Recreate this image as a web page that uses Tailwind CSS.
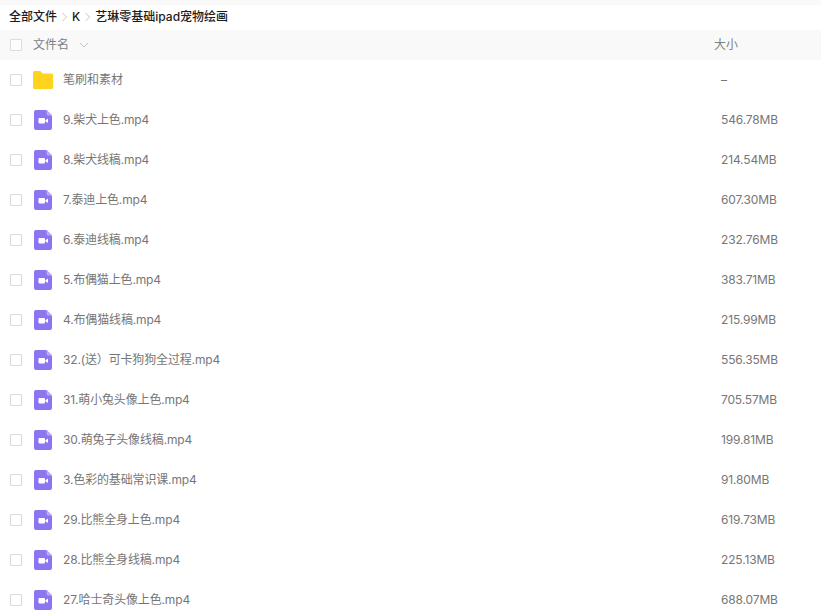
<!DOCTYPE html>
<html><head><meta charset="utf-8"><script src="https://cdn.jsdelivr.net/npm/@tailwindcss/browser@4"></script></head>
<body class="bg-white">
<svg width="0" height="0" class="absolute"><defs>
<symbol id="v" viewBox="0 0 18 20"><path d="M2 0H12.500L18 5.500V18a2 2 0 0 1-2 2H2a2 2 0 0 1-2-2V2a2 2 0 0 1 2-2Z" fill="#8d74f0"/><path d="M12.500 0L18 5.500H14a1.500 1.500 0 0 1-1.500-1.500Z" fill="#b9a8f7"/><rect x="4.500" y="8" width="6.500" height="5.500" rx="1" fill="#fff"/><path d="M11.500 10.200L14 8.600V13L11.500 11.400Z" fill="#fff"/></symbol>
</defs></svg>
<div class="w-[821px] h-[613px] overflow-hidden font-['Inter','Noto_Sans_CJK_SC',sans-serif]">
<div class="h-[5px] bg-[#f9f9f9]"></div>
<div class="h-[25px] pl-[9px] flex items-center gap-[5px] text-[12px] font-medium text-[#1c1c1c] leading-none pb-[1px]">
<span>全部文件</span><svg width="5" height="10" viewBox="0 0 5 10" fill="none" stroke="#c4c4c4"><path d="M.5 1l4 4-4 4"/></svg><span>K</span><svg width="5" height="10" viewBox="0 0 5 10" fill="none" stroke="#c4c4c4"><path d="M.5 1l4 4-4 4"/></svg><span>艺琳零基础ipad宠物绘画</span>
</div>
<div class="h-[30px] bg-[#f9f9f9] flex items-center text-[12px] text-[#808080]">
<span class="ml-[10px] w-[12px] h-[12px] border border-[#dcdcdc] rounded-[1px] bg-white/60"></span>
<span class="ml-[11px]">文件名</span>
<svg class="ml-[10px]" width="10" height="6" viewBox="0 0 10 6" fill="none" stroke="#c4c4c4"><path d="M1 1l4 4 4-4"/></svg>
<span class="ml-[auto] mr-[83px]">大小</span>
</div>
<div class="text-[12px] text-[#767676] tracking-[-0.15px]">
<div class="h-[40px] flex items-center"><span class="ml-[10px] w-[12px] h-[12px] border border-[#dcdcdc] rounded-[1px]"></span>
<svg class="ml-[11px]" width="20" height="18" viewBox="0 0 20 18"><path d="M0 1.500a1.500 1.500 0 0 1 1.500-1.500H7.500L9.500 2.500H18.500A1.500 1.500 0 0 1 20 4V16.500A1.500 1.500 0 0 1 18.500 18H1.500A1.500 1.500 0 0 1 0 16.500Z" fill="#ffd41f"/></svg>
<span class="ml-[10px] flex-1 tracking-normal">笔刷和素材</span><span class="w-[100px]">–</span></div>
<div class="h-[40px] flex items-center"><span class="ml-[10px] w-[12px] h-[12px] border border-[#dcdcdc] rounded-[1px]"></span><svg class="ml-[12px] mr-[11px] w-[18px] h-[20px]"><use href="#v"/></svg><span class="flex-1">9.柴犬上色.mp4</span><span class="w-[100px]">546.78MB</span></div>
<div class="h-[40px] flex items-center"><span class="ml-[10px] w-[12px] h-[12px] border border-[#dcdcdc] rounded-[1px]"></span><svg class="ml-[12px] mr-[11px] w-[18px] h-[20px]"><use href="#v"/></svg><span class="flex-1">8.柴犬线稿.mp4</span><span class="w-[100px]">214.54MB</span></div>
<div class="h-[40px] flex items-center"><span class="ml-[10px] w-[12px] h-[12px] border border-[#dcdcdc] rounded-[1px]"></span><svg class="ml-[12px] mr-[11px] w-[18px] h-[20px]"><use href="#v"/></svg><span class="flex-1">7.泰迪上色.mp4</span><span class="w-[100px]">607.30MB</span></div>
<div class="h-[40px] flex items-center"><span class="ml-[10px] w-[12px] h-[12px] border border-[#dcdcdc] rounded-[1px]"></span><svg class="ml-[12px] mr-[11px] w-[18px] h-[20px]"><use href="#v"/></svg><span class="flex-1">6.泰迪线稿.mp4</span><span class="w-[100px]">232.76MB</span></div>
<div class="h-[40px] flex items-center"><span class="ml-[10px] w-[12px] h-[12px] border border-[#dcdcdc] rounded-[1px]"></span><svg class="ml-[12px] mr-[11px] w-[18px] h-[20px]"><use href="#v"/></svg><span class="flex-1">5.布偶猫上色.mp4</span><span class="w-[100px]">383.71MB</span></div>
<div class="h-[40px] flex items-center"><span class="ml-[10px] w-[12px] h-[12px] border border-[#dcdcdc] rounded-[1px]"></span><svg class="ml-[12px] mr-[11px] w-[18px] h-[20px]"><use href="#v"/></svg><span class="flex-1">4.布偶猫线稿.mp4</span><span class="w-[100px]">215.99MB</span></div>
<div class="h-[40px] flex items-center"><span class="ml-[10px] w-[12px] h-[12px] border border-[#dcdcdc] rounded-[1px]"></span><svg class="ml-[12px] mr-[11px] w-[18px] h-[20px]"><use href="#v"/></svg><span class="flex-1">32.(送）可卡狗狗全过程.mp4</span><span class="w-[100px]">556.35MB</span></div>
<div class="h-[40px] flex items-center"><span class="ml-[10px] w-[12px] h-[12px] border border-[#dcdcdc] rounded-[1px]"></span><svg class="ml-[12px] mr-[11px] w-[18px] h-[20px]"><use href="#v"/></svg><span class="flex-1">31.萌小兔头像上色.mp4</span><span class="w-[100px]">705.57MB</span></div>
<div class="h-[40px] flex items-center"><span class="ml-[10px] w-[12px] h-[12px] border border-[#dcdcdc] rounded-[1px]"></span><svg class="ml-[12px] mr-[11px] w-[18px] h-[20px]"><use href="#v"/></svg><span class="flex-1">30.萌兔子头像线稿.mp4</span><span class="w-[100px]">199.81MB</span></div>
<div class="h-[40px] flex items-center"><span class="ml-[10px] w-[12px] h-[12px] border border-[#dcdcdc] rounded-[1px]"></span><svg class="ml-[12px] mr-[11px] w-[18px] h-[20px]"><use href="#v"/></svg><span class="flex-1">3.色彩的基础常识课.mp4</span><span class="w-[100px]">91.80MB</span></div>
<div class="h-[40px] flex items-center"><span class="ml-[10px] w-[12px] h-[12px] border border-[#dcdcdc] rounded-[1px]"></span><svg class="ml-[12px] mr-[11px] w-[18px] h-[20px]"><use href="#v"/></svg><span class="flex-1">29.比熊全身上色.mp4</span><span class="w-[100px]">619.73MB</span></div>
<div class="h-[40px] flex items-center"><span class="ml-[10px] w-[12px] h-[12px] border border-[#dcdcdc] rounded-[1px]"></span><svg class="ml-[12px] mr-[11px] w-[18px] h-[20px]"><use href="#v"/></svg><span class="flex-1">28.比熊全身线稿.mp4</span><span class="w-[100px]">225.13MB</span></div>
<div class="h-[40px] flex items-center"><span class="ml-[10px] w-[12px] h-[12px] border border-[#dcdcdc] rounded-[1px]"></span><svg class="ml-[12px] mr-[11px] w-[18px] h-[20px]"><use href="#v"/></svg><span class="flex-1">27.哈士奇头像上色.mp4</span><span class="w-[100px]">688.07MB</span></div>
</div>
</div>
</body></html>
